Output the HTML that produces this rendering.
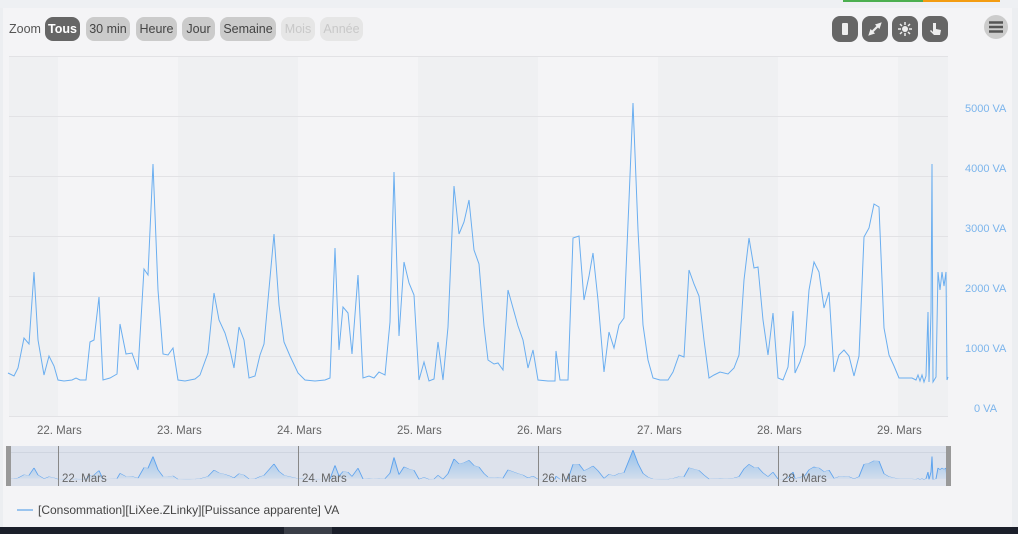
<!DOCTYPE html>
<html><head><meta charset="utf-8"><style>
*{margin:0;padding:0;box-sizing:border-box}
body{width:1018px;height:534px;overflow:hidden;background:#f4f4f6;font-family:"Liberation Sans",sans-serif;position:relative}
.top{position:absolute;left:0;top:0;width:1018px;height:8px;background:#eef0f3}
.btn{position:absolute;top:17px;height:24px;border-radius:8px;font-size:12.5px;line-height:24px;text-align:center;background:#cbcbcb;color:#444}
.ic{position:absolute;top:16px;width:26px;height:26px;border-radius:8px;background:#666}
.yl{position:absolute;left:965px;font-size:11px;color:#7cb5ec}
.xl{position:absolute;top:425px;font-size:11.5px;color:#666}
</style></head><body>
<div class="top"></div>
<div style="position:absolute;left:843px;top:0;width:80px;height:2px;background:#4caf50"></div>
<div style="position:absolute;left:923px;top:0;width:77px;height:2px;background:#f39c12"></div>
<div style="position:absolute;left:0;top:8px;width:3px;height:519px;background:#eceef1"></div>
<div style="position:absolute;left:1012px;top:8px;width:6px;height:519px;background:#eceef1"></div>
<div style="position:absolute;left:9px;top:22px;font-size:12.5px;color:#555">Zoom</div>
<div class="btn" style="left:45px;width:35px;background:#666;color:#fff;font-weight:bold">Tous</div>
<div class="btn" style="left:86px;width:44px">30 min</div>
<div class="btn" style="left:136px;width:41px">Heure</div>
<div class="btn" style="left:182px;width:33px">Jour</div>
<div class="btn" style="left:220px;width:56px">Semaine</div>
<div class="btn" style="left:281px;width:34px;background:#e6e6e6;color:#c8c8c8">Mois</div>
<div class="btn" style="left:320px;width:43px;background:#e6e6e6;color:#c8c8c8">Année</div>
<div class="ic" style="left:832px"><div style="position:absolute;left:10px;top:7px;width:6px;height:12px;background:#eee;border-radius:1px"></div></div>
<div class="ic" style="left:862px"><svg width="26" height="26"><path d="M8 18L18 8M8 18l3-1-2-2zM18 8l-3 1 2 2z" stroke="#eee" stroke-width="2.2" fill="#eee"/></svg></div>
<div class="ic" style="left:892px"><svg width="26" height="26"><circle cx="13" cy="13" r="3" fill="#eee"/><path d="M13 6v3M13 17v3M6 13h3M17 13h3M8 8l2 2M16 16l2 2M18 8l-2 2M8 18l2-2" stroke="#eee" stroke-width="1.5"/></svg></div>
<div class="ic" style="left:922px"><svg width="26" height="26"><path d="M11 7v9l-2-2-1 1 4 4h6l1-5-5-1V7z" fill="#eee"/></svg></div>
<div style="position:absolute;left:984px;top:15px;width:24px;height:24px;border-radius:12px;background:#ccc"><svg width="24" height="24"><path d="M5 7.5h14M5 12h14M5 16.5h14" stroke="#555" stroke-width="2.5"/></svg></div>
<svg style="position:absolute;left:0;top:0" width="1018" height="534">
<g fill="#eff0f2"><rect x="9" y="56" width="49" height="360"/><rect x="178" y="56" width="120" height="360"/><rect x="418" y="56" width="120" height="360"/><rect x="658" y="56" width="120" height="360"/><rect x="898" y="56" width="50" height="360"/></g>
<g stroke="#e2e2e5" stroke-width="1"><path d="M9 56.5H948M9 116.5H948M9 176.5H948M9 236.5H948M9 296.5H948M9 356.5H948M9 416.5H948"/></g>
<defs><polyline id="d" points="8,373 14,376 18,368 24,338 29,344 34,272 38,340 44,375 49,356 54,366 58,380 64,381 72,380 76,378 80,380 86,380 90,342 94,340 99,297 103,380 110,378 117,374 120,324 126,354 132,353 138,370 144,269 148,275 153,164 158,290 163,354 168,355 173,348 178,380 185,381 195,379 200,375 208,353 214,293 219,320 225,333 230,350 234,368 239,327 244,340 249,378 255,376 260,355 264,344 268,300 274,234 279,305 284,342 290,356 298,373 305,380 315,381 325,380 330,378 335,248 339,350 343,307 348,313 352,354 358,275 363,378 369,376 374,378 379,372 385,375 390,322 394,172 399,336 404,262 409,283 414,295 419,380 424,362 429,381 434,379 438,342 443,380 448,327 454,186 459,234 464,222 469,200 474,250 479,264 484,326 488,360 494,364 498,363 503,370 508,290 513,308 518,326 523,340 528,368 533,350 538,380 548,381 555,381 556,351 560,380 568,380 573,238 579,236 584,300 589,276 593,253 598,300 604,372 609,332 614,348 619,325 624,318 629,200 633,103 638,230 643,325 648,360 653,378 660,380 668,380 673,372 679,355 684,357 689,270 694,284 699,296 704,340 709,378 714,375 720,372 728,374 734,368 739,355 744,280 749,238 754,268 758,267 763,320 768,355 773,313 778,378 783,380 788,367 793,311 795,373 800,362 805,345 809,290 814,262 819,272 824,308 829,292 834,372 839,355 844,350 849,356 854,376 859,356 864,237 869,228 874,204 879,207 884,328 889,355 894,366 899,378 912,378 916,380 918,375 920,381 922,375 924,382 926,376 928,312 929,382 931,312 932,164 933,382 936,377 938,272 940,290 942,272 944,286 946,272 947,380 948,377"/>
<linearGradient id="g" x1="0" y1="0" x2="0" y2="1"><stop offset="0" stop-color="#7cb5ec" stop-opacity=".75"/><stop offset="1" stop-color="#7cb5ec" stop-opacity=".1"/></linearGradient></defs>
<use href="#d" fill="none" stroke="#6aaef0" stroke-width="1"/>
<rect x="8" y="446" width="940" height="40" fill="#dde2ec"/>
<line x1="8" y1="452.5" x2="948" y2="452.5" stroke="#cfd5e0"/>
<g transform="translate(0,439.3) scale(1,0.105)"><use href="#d" fill="url(#g)" stroke="#5ea3ee" stroke-width="1" vector-effect="non-scaling-stroke"/></g>
<g stroke="#888"><path d="M58.5 446V486M298.5 446V486M538.5 446V486M778.5 446V486"/></g>
<rect x="6" y="446" width="5" height="40" fill="#999"/><rect x="946" y="446" width="5" height="40" fill="#999"/>
<g font-size="11.5" fill="#666" font-family="Liberation Sans"><text x="62" y="482">22. Mars</text><text x="302" y="482">24. Mars</text><text x="542" y="482">26. Mars</text><text x="782" y="482">28. Mars</text></g>
<line x1="17" y1="510" x2="33" y2="510" stroke="#7cb5ec" stroke-width="1.5"/>
<rect x="0" y="527" width="1018" height="7" fill="#1b1f2a"/><rect x="284" y="527" width="48" height="7" fill="#3a3e48"/>
</svg>
<div class="yl" style="top:103px">5000 VA</div><div class="yl" style="top:163px">4000 VA</div><div class="yl" style="top:223px">3000 VA</div><div class="yl" style="top:283px">2000 VA</div><div class="yl" style="top:343px">1000 VA</div><div class="yl" style="top:403px;left:974px">0 VA</div>
<div class="xl" style="left:37px">22. Mars</div><div class="xl" style="left:157px">23. Mars</div><div class="xl" style="left:277px">24. Mars</div><div class="xl" style="left:397px">25. Mars</div><div class="xl" style="left:517px">26. Mars</div><div class="xl" style="left:637px">27. Mars</div><div class="xl" style="left:757px">28. Mars</div><div class="xl" style="left:877px">29. Mars</div>
<div style="position:absolute;left:38px;top:503px;font-size:12px;color:#444">[Consommation][LiXee.ZLinky][Puissance apparente] VA</div>
</body></html>
